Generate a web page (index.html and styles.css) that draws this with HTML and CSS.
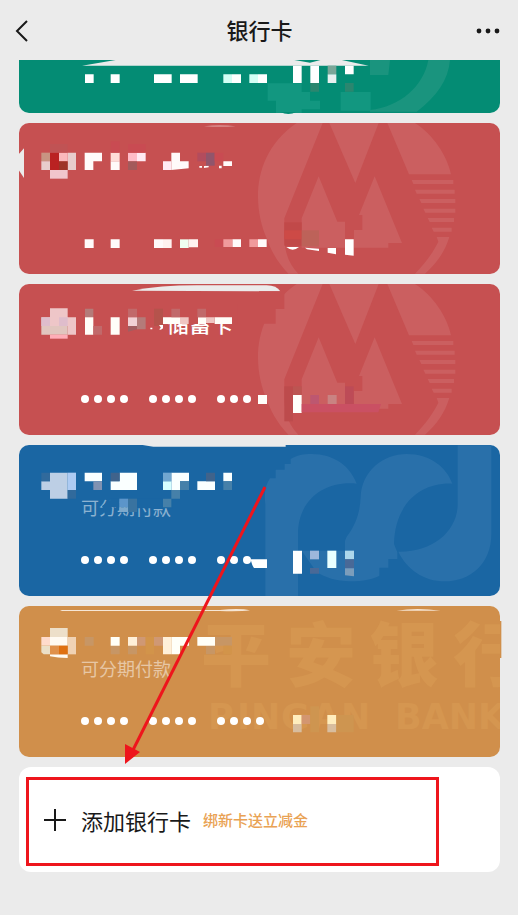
FILE: index.html
```html
<!DOCTYPE html>
<html lang="zh-CN">
	<head>
	<meta charset="utf-8">
	<meta name="viewport" content="width=device-width, initial-scale=1">
	<title>银行卡</title>
	<link rel="stylesheet" href="styles.css">
	</head>
	<body>

		<!-- Shared watermark for the red cards -->
		<svg class="defs" aria-hidden="true">
			<defs>
				<g id="redMark" fill="#cb5f60">
					<path d="M140 24H218L103 310V370C105 420 120 450 145 476H115C80 440 60 400 50 370C10 280 0 120 140 24Z"/>
					<path d="M238 24H386L316 204Z"/>
					<path d="M412 24H495C550 60 590 120 603 178H477Z"/>
					<path d="M206 184L262 320H285V398H155V310Z"/>
					<path d="M374 184L456 384H415V398H312V345H337V300H327Z"/>
					<path d="M485 195H610V207H490ZM495 224H614V236H500ZM508 252H616V264H514ZM520 281H616V293H526ZM533 309H612V321H539ZM545 338H605V350H551Z"/>
					<path d="M560 366H598C585 410 560 445 525 476H495C530 440 550 410 565 380Z"/>
				</g>
			</defs>
		</svg>

		<header class="topbar">
			<button class="icon-button" aria-label="返回">
				<svg width="14" height="24" viewBox="0 0 14 24"><path d="M12 2L2 12L12 22" fill="none" stroke="#191919" stroke-width="2"/></svg>
			</button>
			<h1>银行卡</h1>
			<button class="icon-button" aria-label="更多">
				<svg width="24" height="24" viewBox="0 0 24 24" fill="#191919"><circle cx="3" cy="12" r="2.4"/><circle cx="12" cy="12" r="2.4"/><circle cx="21" cy="12" r="2.4"/></svg>
			</button>
		</header>

		<main class="cards">

			<article class="card card-green">
				<svg class="watermark" viewBox="57 180 1443 159" preserveAspectRatio="xMaxYMin">
					<path fill="#1a947e" d="M1350 180C1345 240 1310 290 1250 335H1110V180H1170L1165 225H1110V330C1200 320 1270 260 1285 180Z"/>
					<path fill="#129780" d="M803 250H905V276H930V302H960V328H905V339H828V302H803ZM1022 276H1112V332H1022Z"/>
				</svg>
				<svg class="mosaic" viewBox="57 180 1443 159" preserveAspectRatio="xMinYMin">
					<path fill="#ebebeb" d="M246 197L360 178H870L930 188L970 178H1015L1106 197Z"/>
					<path fill="#fff" d="M255 223h26v26h-26zM332 223h27v26h-27zM462 223h53v26h-53zM540 223h53v26h-53zM696 223h27v26h-27zM774 223h27v26h-27zM879 197h26v52h-26zM931 197h26v52h-26zM1035 197h26v26h-26z"/>
					<path fill="#d3fff5" d="M670 223h26v26h-26zM748 223h26v26h-26z"/>
					<path fill="#7aa698" d="M983 197h26v26h-26z"/>
					<path fill="#e8f0ef" d="M983 223h26v26h-26z"/>
					<path fill="#2b866f" d="M931 249h26v26h-26zM1035 249h26v26h-26z"/>
					<path fill="#048c74" d="M842 336C855 344 875 344 888 336Z"/>
				</svg>
			</article>

			<article class="card card-red">
				<svg class="watermark" viewBox="-693 24 1443 453" preserveAspectRatio="xMaxYMin"><use href="#redMark"/></svg>
				<svg class="mosaic" viewBox="27 24 1443 453" preserveAspectRatio="xMinYMin">
					<path fill="#ebebeb" d="M26 118L42 100V189L26 165Z"/>
					<path fill="#dc9191" d="M582 34Q630 28 677 34Q630 37 582 34Z"/>
					<!-- bank logo -->
					<path fill="#c89482" d="M94 113h26v26h-26z"/>
					<path fill="#e8cccc" d="M94 139h26v26h-26zM173 113h25v52h-25z"/>
					<path fill="#ba2222" d="M120 113h27v52h-27z"/>
					<path fill="#fbb8bb" d="M147 113h26v26h-26z"/>
					<path fill="#9e3427" d="M147 139h26v26h-26z"/>
					<path fill="#f1c5cc" d="M120 165h53v26h-53z"/>
					<path fill="#c05354" d="M120 87h53v26h-53z"/>
					<!-- bank name -->
					<path fill="#fffafa" d="M224 113h52v26h-26v26h-26zM302 139h27v26h-27zM484 113h26v26h26v21l-52 5zM640 139h26v14h-26zM627 152h8v8h-8zM568 153h8v5h-8zM582 153l14-1v5l-14 2z"/>
					<path fill="#ffdcd8" d="M302 113h27v26h-27z"/>
					<path fill="#ffbcc8" d="M354 113h27v26h-27z"/>
					<path fill="#ffeaf3" d="M381 113h26v26h-26zM459 139h25v26h-25z"/>
					<path fill="#a35a5b" d="M354 139h27v26h-27z"/>
					<path fill="#91556b" d="M588 113h26v39h-26z"/>
					<path fill="#b34c5d" d="M562 113h26v26h-26z"/>
					<path fill="#c94b52" d="M302 79h27v34h-27zM354 87h53v26h-53zM614 113h26v26h-26zM614 373h26v23h-26z"/>
					<!-- card number -->
					<path fill="#fffafa" d="M224 373h27v26h-27zM302 373h27v26h-27zM432 373h27v26h-27zM667 373h26v23h-26zM744 373h26v23h-26z"/>
					<path fill="#fff2ef" d="M459 373h26v26h-26zM536 373h28v24h-28z"/>
					<path fill="#effff0" d="M510 373h26v26h-26z"/>
					<path fill="#f09a9c" d="M640 373h27v23h-27zM718 373h26v23h-26z"/>
					<path fill="#c14949" d="M823 322h52v70h-52z"/>
					<path fill="#cd4a46" d="M823 346h52v27h-52z"/>
					<path fill="#bd6259" d="M875 346h52v48h-52z"/>
					<path fill="#fff" d="M829 396H867Q848 412 829 396ZM885 398L927 401V408L891 403ZM953 399h25v19l-25-5zM1005 373h26v49l-26-3z"/>
				</svg>
			</article>

			<article class="card card-red">
				<svg class="watermark" viewBox="-693 24 1443 453" preserveAspectRatio="xMaxYMin"><use href="#redMark"/></svg>
				<h2 class="name name-clipped">储蓄卡</h2>
				<div class="number" aria-label="卡号">
					<span class="dots"><i></i><i></i><i></i><i></i></span>
					<span class="dots"><i></i><i></i><i></i><i></i></span>
					<span class="dots"><i></i><i></i><i></i></span>
				</div>
				<svg class="mosaic" viewBox="27 18 1443 453" preserveAspectRatio="xMinYMin">
					<path fill="#c65051" d="M450 78h232v60h-232z"/>
					<path fill="#ebebeb" d="M366 38Q450 22 560 22H770Q800 22 811 40Z"/>
					<path fill="#c65051" d="M747 40H823V93H797V137H747Z"/>
					<!-- bank logo -->
					<path fill="#eec6c8" d="M120 91h53v27h25v52h-25v-26h-53z"/>
					<path fill="#e1c6bf" d="M94 118h26v26h53v26h-79z"/>
					<path fill="#dfbdcc" d="M94 118h26v26h-26zM147 118h26v26h-26z"/>
					<path fill="#ffadb7" d="M120 170h53v12h-53z"/>
					<!-- bank name -->
					<path fill="#b47b79" d="M225 92h25v25h-25zM381 118h26v36h-26z"/>
					<path fill="#fffdf8" d="M225 118h25v52h-25zM302 118h27v52h-27zM459 118h51v20h-51zM564 118h24v20h-24zM614 118h52v20h-52z"/>
					<path fill="#c1696a" d="M250 144h26v26h-26zM354 92h27v26h-27zM484 92h26v26h-26zM562 92h26v26h-26z"/>
					<path fill="#f1d1d5" d="M354 118h27v26h-27z"/>
					<path fill="#a25d60" d="M354 144h27v10l-27 7z"/>
					<path fill="#b5534c" d="M432 92h27v52h-27z"/>
					<path fill="#efc5c2" d="M510 118h26v20h-26zM588 118h26v17h-26z"/>
					<path fill="#fff" d="M421 149h6v5h-6zM447 141h12v10q-2 4-10 5v-4q4-1 3-4z"/>
					<!-- card number -->
					<path fill="#fffefa" d="M744 351h27v27h-27zM849 351h26v54h-26z"/>
					<path fill="#bd4b4c" d="M823 325h26v105h-26z"/>
					<path fill="#bc5552" d="M849 325h26v26h-26z"/>
					<path fill="#bd5770" d="M901 351h26v27h-26z"/>
					<path fill="#ca5063" d="M875 378h238l-8 25h-230z"/>
					<path fill="#c98382" d="M953 351h27v27h-27z"/>
					<path fill="#bd4b57" d="M1005 325h26v53h-26z"/>
				</svg>
			</article>

			<article class="card card-blue">
				<svg class="watermark" viewBox="-693 23 1443 453" preserveAspectRatio="xMaxYMin" fill="#2970aa">
					<path d="M46 476V200C42 170 45 145 60 123H77V97H104V80H122V65C140 54 160 50 185 50C250 50 300 85 320 139C220 130 144 190 144 290V476Z"/>
					<path d="M332 180C335 100 400 50 470 50C540 50 590 90 607 139C510 135 435 200 432 320L442 345V365H415V391H388V415C370 425 340 432 300 432C260 432 225 420 200 405L155 340H285V310L290 298C320 260 330 220 332 180Z"/>
					<path d="M623 24H724V290C724 380 660 432 585 432C520 432 470 395 445 343C550 345 623 280 623 200Z"/>
				</svg>
				<p class="note">可分期付款</p>
				<div class="number" aria-label="卡号">
					<span class="dots"><i></i><i></i><i></i><i></i></span>
					<span class="dots"><i></i><i></i><i></i><i></i></span>
					<span class="dots"><i></i><i></i><i></i></span>
				</div>
				<svg class="mosaic" viewBox="27 23 1443 453" preserveAspectRatio="xMinYMin">
					<path fill="#ebebeb" d="M384 21H827V28H430Z"/>
					<path fill="#1a66a3" d="M302 184h27v26h-27zM381 184h106v29h-106zM276 206l30-22v26l-20 26z"/>
					<!-- bank logo -->
					<path fill="#bdcfe5" d="M120 106h53v78h-53v-26h-26v-26h26z"/>
					<path fill="#adcbf3" d="M173 106h25v52h-25z"/>
					<path fill="#316a9c" d="M94 106h26v26h-26zM173 158h25v26h-25z"/>
					<!-- bank name -->
					<path fill="#faffff" d="M224 106h52v26h-52zM329 106h52v52h-79v-26h27zM484 106h53v26h-27v26h-26zM562 132h53v26h-53zM640 106h26v26h-26z"/>
					<path fill="#40638b" d="M302 106h27v26h-27zM588 106h27v26h-27z"/>
					<path fill="#8092b2" d="M250 132h26v26h-26z"/>
					<path fill="#72a7d0" d="M459 106h25v26h-25z"/>
					<path fill="#d6ffff" d="M459 132h25v26h-25z"/>
					<path fill="#4680a9" d="M510 132h27v26h-27zM484 158h26v26h-26zM459 184h25v26h-25zM640 132h26v26h-26z"/>
					<path fill="#5c95ca" d="M328 184h26v26h-26z"/>
					<path fill="#7da9cc" d="M328 210h26v14h-26z"/>
					<path fill="#3973a0" d="M354 184h27v40h-27z"/>
					<!-- card number -->
					<path fill="#fff" d="M722 366H771V392H732Q726 385 722 366ZM849 340h27v69h-27z"/>
					<path fill="#9eb7dc" d="M900 340h27v26h-27z"/>
					<path fill="#e9ffff" d="M952 340h27v52h-27z"/>
					<path fill="#add7eb" d="M1005 340h27v26h-27z"/>
					<path fill="#496997" d="M900 392h27v17h-27zM1005 366h27v27h-27z"/>
					<path fill="#7c9dbb" d="M1005 393h27v24l-27-3z"/>
				</svg>
			</article>

			<article class="card card-orange">
				<svg class="watermark" viewBox="0 0 481 151" preserveAspectRatio="xMaxYMin" fill="#d59650">
					<text class="mark-cn" x="182 267 350 434" y="75">平安银行</text>
					<text class="mark-en" x="189 218 232 262 293 322" y="123">PINGAN</text>
					<text class="mark-en" x="376" y="123">BANK</text>
				</svg>
				<p class="note">可分期付款</p>
				<div class="number" aria-label="卡号">
					<span class="dots"><i></i><i></i><i></i><i></i></span>
					<span class="dots"><i></i><i></i><i></i><i></i></span>
					<span class="dots"><i></i><i></i><i></i><i></i></span>
				</div>
				<svg class="mosaic" viewBox="27 21 1443 453" preserveAspectRatio="xMinYMin">
					<path fill="#f6e6d5" d="M150 33H630Q690 27 720 34Q690 38 630 36H156ZM1160 35Q1220 25 1292 35Z"/>
					<path fill="#d08f4b" d="M1470 66h4v111h-4z"/>
					<!-- bank logo -->
					<path fill="#eddfc9" d="M120 87h53v27h-53z"/>
					<path fill="#fffaf2" d="M120 114h53v26h-53zM120 166h53v11q-30 0-53-5z"/>
					<path fill="#ffdbcc" d="M94 114h26v26h-26z"/>
					<path fill="#ebdfc7" d="M94 140h26v26h-19l-7-6z"/>
					<path fill="#f0d2b4" d="M173 114h25v52h-25z"/>
					<path fill="#e0914b" d="M120 140h27v26h-27z"/>
					<path fill="#df7011" d="M147 140h26v26h-26z"/>
					<!-- bank name -->
					<path fill="#c79665" d="M224 114h27v26h-27zM302 140h27v26h-27zM354 140h27v26h-27zM588 140h27v26h-27zM615 114h51v26h-51z"/>
					<path fill="#fffff8" d="M302 114h27v26h-27zM484 114h53v26h-27v26h-26zM562 114h53v26h-53z"/>
					<path fill="#fff0d9" d="M354 114h27v26h-27zM459 114h25v52h-25z"/>
					<path fill="#cf9874" d="M381 114h26v26h-26zM432 114h27v26h-27z"/>
					<path fill="#d2944a" d="M407 114h25v52h-25zM640 140h26v26h-26z"/>
					<!-- card number -->
					<path fill="#ffedbd" d="M849 348h26v27h-26zM952 348h27v27h-27z"/>
					<path fill="#d8bd9e" d="M849 375h26v25h-26zM952 375h27v25h-27z"/>
					<path fill="#d39670" d="M875 348h26v27h-26z"/>
					<path fill="#ce9550" d="M979 348h52v52h-52zM901 322h26v78h-26z"/>
				</svg>
			</article>

			<section class="card card-add">
				<button class="add-button">
					<svg class="plus" width="22" height="22" viewBox="0 0 22 22"><path d="M11 0V22M0 11H22" stroke="#191919" stroke-width="2"/></svg>
					<span class="add-label">添加银行卡</span>
					<span class="promo">绑新卡送立减金</span>
				</button>
				<div class="highlight"></div>
			</section>

			<!-- Arrow pointing at the add button -->
			<svg class="arrow" width="150" height="280" viewBox="0 0 150 280" aria-hidden="true">
				<path d="M145 3L12 268" stroke="#ee151c" stroke-width="3"/>
				<path d="M5 260L20 268L5 280Z" fill="#ee151c"/>
			</svg>
		</main>

	</body>
</html>
```

FILE: styles.css
```css
* { box-sizing: border-box; }
body { margin: 0; background: #ebebeb; color: #191919; font-family: "Noto Sans CJK SC", sans-serif; }
button { font: inherit; color: inherit; background: none; border: 0; padding: 0; cursor: pointer; }
.defs { position: absolute; width: 0; height: 0; }

.topbar { display: flex; align-items: center; justify-content: space-between; height: 60px; padding: 2px 18px 0 15px; }
.topbar h1 { margin: 0; padding: 0 0 4px 4px; font-size: 22px; line-height: 32px; font-weight: 500; }
.icon-button { display: flex; width: 24px; height: 24px; }

.cards { position: relative; display: flex; flex-direction: column; gap: 10px; padding: 0 18px 40px 19px; }
.card { position: relative; display: flex; flex-direction: column; min-height: 151px; padding: 26px 62px 32px; border-radius: 10px; color: #fff; }
.card-green { min-height: 53px; padding: 0; background: #048c74; border-radius: 0 0 10px 10px; }
.card-red { background: #c65051; }
.card-blue { background: #1a66a3; }
.card-orange { background: #d08f4b; }

.watermark, .mosaic { position: absolute; top: 0; left: 0; width: 100%; height: 100%; }
.watermark { border-radius: 10px; }
.mosaic { overflow: visible; }
.mark-cn { font-size: 70px; font-weight: 900; }
.mark-en { font-family: "DejaVu Sans", sans-serif; font-size: 35px; font-weight: 700; }

.name { position: relative; margin: 0; font-size: 22px; line-height: 24px; font-weight: 500; }
.name-clipped { padding-left: 86px; }
.note { position: relative; margin: 25px 0 0; font-size: 18px; line-height: 22px; color: rgba(255, 255, 255, 0.5); }
.number { position: relative; display: flex; gap: 21px; margin-top: auto; }
.dots { display: flex; gap: 5px; }
.dots i { width: 8px; height: 8px; border-radius: 50%; background: #fff; }

.card-add { min-height: 105px; padding: 0 25px; justify-content: center; background: #fff; color: #191919; border-radius: 12px; }
.add-button { display: flex; align-items: center; text-align: left; line-height: 32px; }
.plus { margin-right: 15px; }
.add-label { font-size: 22px; }
.promo { margin-left: 12px; font-size: 15px; font-weight: 500; color: #e9a253; }
.highlight { position: absolute; top: 10px; left: 7px; right: 61px; height: 89px; border: 3px solid #ee151c; pointer-events: none; }
.arrow { position: absolute; top: 424px; left: 120px; pointer-events: none; }
```
